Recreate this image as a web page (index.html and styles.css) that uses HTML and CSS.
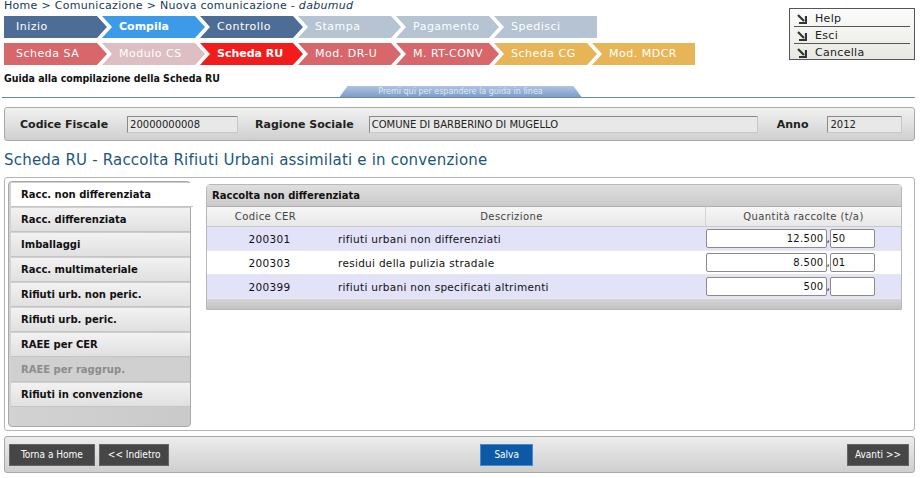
FILE: index.html
```html
<!DOCTYPE html>
<html lang="it">
<head>
    <meta charset="UTF-8">
    <title>Scheda RU</title>
    <link rel="stylesheet" href="styles.css">
</head>
<body>

<div class="top">
    <div class="top-left">
        <div class="breadcrumb">Home &gt; Comunicazione &gt; Nuova comunicazione - <i>dabumud</i></div>
        <div class="steps">
            <div class="step blue">Inizio</div>
            <div class="step bright">Compila</div>
            <div class="step blue">Controllo</div>
            <div class="step pale">Stampa</div>
            <div class="step pale">Pagamento</div>
            <div class="step pale last">Spedisci</div>
        </div>
        <div class="steps">
            <div class="step red">Scheda SA</div>
            <div class="step pink">Modulo CS</div>
            <div class="step fire">Scheda RU</div>
            <div class="step red">Mod. DR-U</div>
            <div class="step red">M. RT-CONV</div>
            <div class="step orange">Scheda CG</div>
            <div class="step orange last">Mod. MDCR</div>
        </div>
    </div>
    <div class="menu-box">
        <div class="menu-item"><svg width="10" height="10" viewBox="0 0 10 10"><path d="M1 1 L7 7" stroke="#333" stroke-width="2.2"/><path d="M9 2 V9 H2" fill="none" stroke="#333" stroke-width="2.2"/></svg>Help</div>
        <div class="menu-item"><svg width="10" height="10" viewBox="0 0 10 10"><path d="M1 1 L7 7" stroke="#333" stroke-width="2.2"/><path d="M9 2 V9 H2" fill="none" stroke="#333" stroke-width="2.2"/></svg>Esci</div>
        <div class="menu-item"><svg width="10" height="10" viewBox="0 0 10 10"><path d="M1 1 L7 7" stroke="#333" stroke-width="2.2"/><path d="M9 2 V9 H2" fill="none" stroke="#333" stroke-width="2.2"/></svg>Cancella</div>
    </div>
</div>

<div class="guide-title">Guida alla compilazione della Scheda RU</div>
<div class="guide-line">
    <div class="guide-tab">Premi qui per espandere la guida in linea</div>
</div>

<div class="info-bar">
    <span class="info-label">Codice Fiscale</span>
    <span class="info-field cf">20000000008</span>
    <span class="info-label">Ragione Sociale</span>
    <span class="info-field rs">COMUNE DI BARBERINO DI MUGELLO</span>
    <span class="info-label">Anno</span>
    <span class="info-field anno">2012</span>
</div>

<h1 class="page-title">Scheda RU - Raccolta Rifiuti Urbani assimilati e in convenzione</h1>

<div class="main-box">
    <div class="tabs">
        <div class="tab active">Racc. non differenziata</div>
        <div class="tab">Racc. differenziata</div>
        <div class="tab">Imballaggi</div>
        <div class="tab">Racc. multimateriale</div>
        <div class="tab">Rifiuti urb. non peric.</div>
        <div class="tab">Rifiuti urb. peric.</div>
        <div class="tab">RAEE per CER</div>
        <div class="tab disabled">RAEE per raggrup.</div>
        <div class="tab">Rifiuti in convenzione</div>
    </div>

    <div class="panel">
        <div class="panel-head">Raccolta non differenziata</div>
        <table class="cer-table">
            <thead>
                <tr>
                    <th class="col-code">Codice CER</th>
                    <th class="col-desc">Descrizione</th>
                    <th class="col-qty">Quantità raccolte (t/a)</th>
                </tr>
            </thead>
            <tbody>
                <tr class="odd">
                    <td class="code">200301</td>
                    <td class="desc">rifiuti urbani non differenziati</td>
                    <td class="qty"><span class="num int">12.500</span>,<span class="num dec">50</span></td>
                </tr>
                <tr>
                    <td class="code">200303</td>
                    <td class="desc">residui della pulizia stradale</td>
                    <td class="qty"><span class="num int">8.500</span>,<span class="num dec">01</span></td>
                </tr>
                <tr class="odd">
                    <td class="code">200399</td>
                    <td class="desc">rifiuti urbani non specificati altrimenti</td>
                    <td class="qty"><span class="num int">500</span>,<span class="num dec"></span></td>
                </tr>
            </tbody>
        </table>
        <div class="panel-foot"></div>
    </div>
</div>

<div class="bottom-bar">
    <button class="btn">Torna a Home</button>
    <button class="btn back">&lt;&lt; Indietro</button>
    <button class="btn save">Salva</button>
    <button class="btn next">Avanti &gt;&gt;</button>
</div>

</body>
</html>
```

FILE: styles.css
```css
body {
    font-family: "DejaVu Sans", Verdana, sans-serif;
    font-size: 11px;
    background-color: #fff;
    color: #000;
    margin: 0;
    padding: 0;
    width: 921px;
}
.top {
    display: flex;
    justify-content: space-between;
    height: 68px;
}
.top-left {
    padding-left: 4px;
}
.breadcrumb {
    color: #163a5c;
    font-size: 11px;
    line-height: 13px;
    margin-top: -1px;
    letter-spacing: 0.3px;
}
.steps {
    display: flex;
    margin-top: 4px;
}
.steps + .steps {
    margin-top: 5px;
}
.step {
    width: 103px;
    height: 22px;
    line-height: 22px;
    margin-left: -5px;
    padding-left: 17px;
    box-sizing: border-box;
    color: #fff;
    font-size: 11px;
    letter-spacing: 0.5px;
    clip-path: polygon(0 0, calc(100% - 10px) 0, 100% 50%, calc(100% - 10px) 100%, 0 100%, 10px 50%);
}
.step:first-child {
    margin-left: 0;
    padding-left: 12px;
    clip-path: polygon(0 0, calc(100% - 10px) 0, 100% 50%, calc(100% - 10px) 100%, 0 100%);
}
.step.last {
    clip-path: polygon(0 0, 100% 0, 100% 100%, 0 100%, 10px 50%);
}
.step.blue { background-color: #4d6d96; }
.step.bright { background-color: #3c9be8; font-weight: bold; letter-spacing: 0; }
.step.pale { background-color: #b5c3d3; }
.step.red { background-color: #d7676b; }
.step.pink { background-color: #dcbec3; }
.step.fire { background-color: #f21c1c; font-weight: bold; letter-spacing: 0; }
.step.orange { background-color: #e7b456; }

.menu-box {
    margin: 8px 6px 0 0;
    width: 126px;
    height: 52px;
    border: 1px solid #555;
    background: linear-gradient(#fcfcfc, #e8e8e2);
    padding: 2px 4px 0 4px;
    box-sizing: border-box;
}
.menu-item {
    display: flex;
    align-items: center;
    gap: 8px;
    height: 15px;
    padding-left: 3px;
    color: #222;
    font-size: 11px;
    letter-spacing: 0.3px;
    border-bottom: 1px solid #555;
    margin-bottom: 1px;
}
.menu-item:last-child {
    border-bottom: none;
}

.guide-title {
    font-family: "DejaVu Sans Condensed", "DejaVu Sans", sans-serif;
    font-weight: bold;
    font-size: 10.5px;
    padding-left: 4px;
    margin-top: 4px;
    color: #111;
}
.guide-line {
    margin: 2px 6px 0 2px;
    height: 11px;
    border-bottom: 1px solid #6b8aa8;
    display: flex;
    justify-content: center;
}
.guide-tab {
    margin-left: -456px;
    position: relative;
    left: 230px;
    width: 242px;
    height: 11px;
    line-height: 11px;
    font-size: 8px;
    text-align: center;
    color: #dde8f6;
    background: linear-gradient(#b0c4e0, #7c9cca);
    clip-path: polygon(8px 0, calc(100% - 8px) 0, 100% 100%, 0 100%);
}

.info-bar {
    margin: 9px 6px 0 4px;
    height: 34px;
    box-sizing: border-box;
    border: 1px solid #a8a8a8;
    border-radius: 3px;
    background: linear-gradient(#f2f2f2, #cfcfcf);
    display: flex;
    align-items: center;
    padding-left: 15px;
}
.info-label {
    font-weight: bold;
    font-size: 11px;
    color: #222;
}
.info-field {
    height: 17px;
    line-height: 16px;
    box-sizing: border-box;
    border: 1px solid #8a8a8a;
    border-right-color: #c8c8c8;
    border-bottom-color: #c8c8c8;
    background-color: #e8e8e8;
    font-size: 10px;
    padding-left: 2px;
    color: #222;
}
.info-field.cf { width: 111px; margin: 0 17px 0 19px; }
.info-field.rs { width: 389px; margin: 0 19px 0 15px; }
.info-field.anno { width: 75px; margin-left: 19px; }

.page-title {
    font-size: 15px;
    font-weight: normal;
    color: #1b5878;
    margin: 9px 0 0 4px;
    letter-spacing: 0.2px;
    line-height: 20px;
}

.main-box {
    margin: 7px 6px 0 4px;
    height: 254px;
    box-sizing: border-box;
    border: 1px solid #b4b4b4;
    border-radius: 3px;
    display: flex;
    align-items: flex-start;
    padding: 3px 12px 0 3px;
    gap: 15px;
}
.tabs {
    width: 183px;
    height: 246px;
    box-sizing: border-box;
    border: 1px solid #a8a8a8;
    border-radius: 4px;
    background: linear-gradient(to right, #d2d2d2, #cacaca);
    padding: 1px 0 0 2px;
}
.tab {
    height: 24px;
    line-height: 23px;
    box-sizing: border-box;
    margin-bottom: 1px;
    padding-left: 10px;
    font-weight: bold;
    font-size: 10px;
    color: #111;
    background: linear-gradient(#f2f2f2, #e0e0e0);
    border-bottom: 1px solid #c4c4c4;
}
.tab.active {
    background: #fff;
    margin-right: -3px;
}
.tab.disabled {
    background: #d0d0d0;
    color: #8c8c8c;
}

.panel {
    flex: 1;
    margin-top: 3px;
    border: 1px solid #b8b8b8;
    border-radius: 4px 4px 0 0;
}
.panel-head {
    height: 21px;
    line-height: 21px;
    padding-left: 5px;
    font-weight: bold;
    font-size: 10px;
    color: #111;
    background: linear-gradient(#dedede, #cbcbcb);
    border-bottom: 1px solid #b0b0b0;
}
.cer-table {
    width: 100%;
    border-collapse: collapse;
}
.cer-table th {
    height: 19px;
    font-weight: normal;
    font-size: 10px;
    color: #444;
    letter-spacing: 0.4px;
    background: linear-gradient(#f6f6f6, #e8e8e8);
    border-bottom: 1px solid #c8c8c8;
    padding: 0;
}
.cer-table th.col-code {
    width: 111px;
    box-sizing: border-box;
    padding-left: 6px;
}
.col-desc { width: 387px; }
.col-qty { border-left: 1px solid #d4d4d4; }
.cer-table td {
    height: 23px;
    padding: 0;
    font-size: 10.5px;
    color: #111;
    letter-spacing: 0.3px;
    border-bottom: 1px solid #e8e8ee;
}
.cer-table tr.odd td {
    background-color: #e2e2f8;
}
.cer-table td.code {
    text-align: center;
    padding-left: 14px;
}
.cer-table td.desc {
    padding-left: 20px;
}
.cer-table td.qty {
    white-space: nowrap;
}
.num {
    display: inline-block;
    vertical-align: middle;
    height: 19px;
    line-height: 18px;
    box-sizing: border-box;
    border: 1px solid #8a8a8a;
    border-radius: 2px;
    background-color: #fff;
    font-size: 10px;
    color: #111;
}
.num.int {
    width: 121px;
    text-align: right;
    padding-right: 2px;
}
.num.dec {
    width: 45px;
    padding-left: 1px;
}
.panel-foot {
    height: 10px;
    background: linear-gradient(#d4d4d4, #c2c2c2);
}

.bottom-bar {
    margin: 5px 6px 0 4px;
    height: 37px;
    box-sizing: border-box;
    border: 1px solid #a8a8a8;
    border-radius: 3px;
    background: linear-gradient(#ececec, #cfcfcf);
    display: flex;
    align-items: center;
    padding: 0 5px 0 4px;
    gap: 4px;
}
.btn {
    height: 22px;
    border: 1px solid #666;
    background-color: #464646;
    color: #fff;
    font-family: "DejaVu Sans Condensed", "DejaVu Sans", sans-serif;
    font-size: 10px;
    padding: 0 11px;
    cursor: pointer;
}
.btn.back {
    padding: 0 8px;
}
.btn.save {
    margin-left: 307px;
    background-color: #0c5aa6;
    border-color: #4a8ad0;
    padding: 0 13px;
}
.btn.next {
    margin-left: auto;
    padding: 0 7px;
}
```
